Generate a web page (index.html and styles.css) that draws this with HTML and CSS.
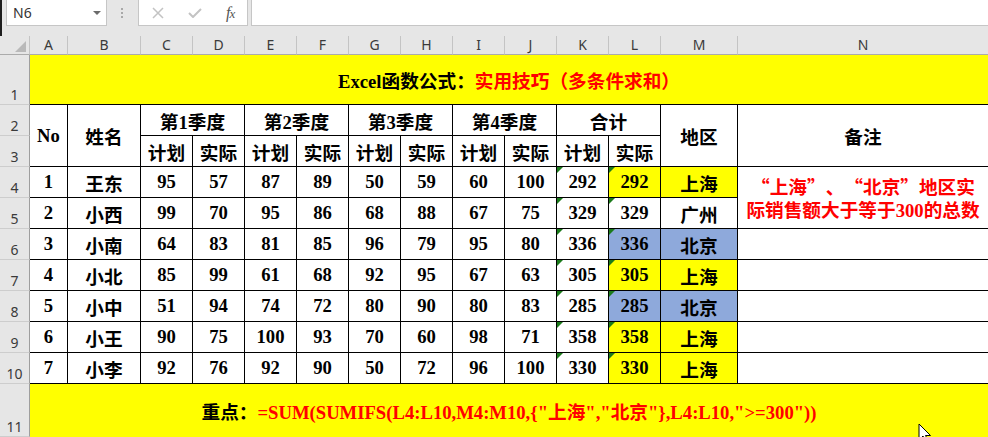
FILE: index.html
```html
<!DOCTYPE html>
<html lang="zh-CN">
<head>
  <meta charset="UTF-8">
  <meta name="viewport" content="width=device-width, initial-scale=1.0">
  <title>Excel函数公式：多条件求和</title>
  <link rel="stylesheet" href="styles.css">
</head>
<body>
  <div class="toolbar">
    <div class="name-box">
      <span>N6</span>
      <svg width="8" height="4" viewBox="0 0 8 4"><path d="M0 0H8L4 4Z" fill="#6b6b6b"/></svg>
    </div>
    <svg class="grip" width="3" height="11" viewBox="0 0 3 11">
      <rect x="0" y="0" width="2" height="2" fill="#a8a8a8"/>
      <rect x="0" y="4" width="2" height="2" fill="#a8a8a8"/>
      <rect x="0" y="8" width="2" height="2" fill="#a8a8a8"/>
    </svg>
    <div class="fx-box">
      <svg class="cancel" width="12" height="12" viewBox="0 0 12 12">
        <path d="M1 1L11 11M11 1L1 11" stroke="#c3c3c3" stroke-width="1.5"/>
      </svg>
      <svg class="enter" width="14" height="10" viewBox="0 0 14 10">
        <path d="M1 5L5 9L13 1" stroke="#c3c3c3" stroke-width="2" fill="none"/>
      </svg>
      <span class="fx">f<i>x</i></span>
    </div>
    <div class="formula-input"></div>
  </div>

  <div class="sheet">
    <!-- column headers -->
    <div class="corner">
      <svg width="11" height="11" viewBox="0 0 11 11"><path d="M11 0V11H0Z" fill="#b9b9b9"/></svg>
    </div>
    <div class="ch">A</div>
    <div class="ch">B</div>
    <div class="ch">C</div>
    <div class="ch">D</div>
    <div class="ch">E</div>
    <div class="ch">F</div>
    <div class="ch">G</div>
    <div class="ch">H</div>
    <div class="ch">I</div>
    <div class="ch">J</div>
    <div class="ch">K</div>
    <div class="ch">L</div>
    <div class="ch">M</div>
    <div class="ch last">N</div>

    <!-- row 1 -->
    <div class="rh">1</div>
    <div class="banner title">Excel函数公式：<span class="red">实用技巧（多条件求和）</span></div>

    <!-- rows 2-3 -->
    <div class="rh">2</div>
    <div class="c span-r">No</div>
    <div class="c span-r">姓名</div>
    <div class="c span-c">第1季度</div>
    <div class="c span-c">第2季度</div>
    <div class="c span-c">第3季度</div>
    <div class="c span-c">第4季度</div>
    <div class="c span-c">合计</div>
    <div class="c span-r">地区</div>
    <div class="c span-r last">备注</div>

    <div class="rh">3</div>
    <div class="c">计划</div><div class="c">实际</div>
    <div class="c">计划</div><div class="c">实际</div>
    <div class="c">计划</div><div class="c">实际</div>
    <div class="c">计划</div><div class="c">实际</div>
    <div class="c">计划</div><div class="c">实际</div>

    <!-- data -->
    <div class="rh">4</div>
    <div class="c">1</div><div class="c">王东</div>
    <div class="c">95</div><div class="c">57</div><div class="c">87</div><div class="c">89</div>
    <div class="c">50</div><div class="c">59</div><div class="c">60</div><div class="c">100</div>
    <div class="c flag">292</div><div class="c flag y">292</div><div class="c y">上海</div>
    <div class="c span-r last note">
      <span class="note-text">“上海”、“北京”地区实<br>际销售额大于等于<span class="num">300</span>的总数</span>
    </div>

    <div class="rh">5</div>
    <div class="c">2</div><div class="c">小西</div>
    <div class="c">99</div><div class="c">70</div><div class="c">95</div><div class="c">86</div>
    <div class="c">68</div><div class="c">88</div><div class="c">67</div><div class="c">75</div>
    <div class="c flag">329</div><div class="c flag">329</div><div class="c">广州</div>

    <div class="rh">6</div>
    <div class="c">3</div><div class="c">小南</div>
    <div class="c">64</div><div class="c">83</div><div class="c">81</div><div class="c">85</div>
    <div class="c">96</div><div class="c">79</div><div class="c">95</div><div class="c">80</div>
    <div class="c flag">336</div><div class="c flag b">336</div><div class="c b">北京</div>
    <div class="c last"></div>

    <div class="rh">7</div>
    <div class="c">4</div><div class="c">小北</div>
    <div class="c">85</div><div class="c">99</div><div class="c">61</div><div class="c">68</div>
    <div class="c">92</div><div class="c">95</div><div class="c">67</div><div class="c">63</div>
    <div class="c flag">305</div><div class="c flag y">305</div><div class="c y">上海</div>
    <div class="c last"></div>

    <div class="rh">8</div>
    <div class="c">5</div><div class="c">小中</div>
    <div class="c">51</div><div class="c">94</div><div class="c">74</div><div class="c">72</div>
    <div class="c">80</div><div class="c">90</div><div class="c">80</div><div class="c">83</div>
    <div class="c flag">285</div><div class="c flag b">285</div><div class="c b">北京</div>
    <div class="c last"></div>

    <div class="rh">9</div>
    <div class="c">6</div><div class="c">小王</div>
    <div class="c">90</div><div class="c">75</div><div class="c">100</div><div class="c">93</div>
    <div class="c">70</div><div class="c">60</div><div class="c">98</div><div class="c">71</div>
    <div class="c flag">358</div><div class="c flag y">358</div><div class="c y">上海</div>
    <div class="c last"></div>

    <div class="rh">10</div>
    <div class="c">7</div><div class="c">小李</div>
    <div class="c">92</div><div class="c">76</div><div class="c">92</div><div class="c">90</div>
    <div class="c">50</div><div class="c">72</div><div class="c">96</div><div class="c">100</div>
    <div class="c flag">330</div><div class="c flag y">330</div><div class="c y">上海</div>
    <div class="c last"></div>

    <!-- row 11 -->
    <div class="rh">11</div>
    <div class="banner formula">重点：<span class="red">=SUM(SUMIFS(L4:L10,M4:M10,{"上海","北京"},L4:L10,"&gt;=300"))</span></div>
  </div>

  <svg class="cursor" width="13" height="20" viewBox="0 0 13 20">
    <path d="M1 1V17L5 13L8 19.5L10.5 18.5L7.5 12.5H12.5Z" fill="#fff" stroke="#000" stroke-width="1"/>
  </svg>
</body>
</html>
```

FILE: styles.css
```css
html, body {
  margin: 0;
  padding: 0;
}

body {
  width: 988px;
  height: 437px;
  overflow: hidden;
  position: relative;
  background: #fff;
  font-family: "Noto Sans", "DejaVu Sans", sans-serif;
}

/* formula bar */
.toolbar {
  display: flex;
  align-items: flex-start;
  height: 36px;
  box-sizing: border-box;
  background: #e6e6e6;
  border-left: 2px solid #1e1e1e;
}

.name-box {
  width: 101px;
  height: 26px;
  margin-left: 4px;
  box-sizing: border-box;
  background: #fff;
  border: 1px solid #c6c6c6;
  border-top: none;
  display: flex;
  align-items: center;
  justify-content: space-between;
  padding: 0 5px 0 6px;
  font-size: 14px;
  color: #333;
}

.grip {
  margin: 8px 0 0 14px;
}

.fx-box {
  width: 110px;
  height: 26px;
  margin-left: 14px;
  box-sizing: border-box;
  background: #fff;
  border: 1px solid #c6c6c6;
  border-top: none;
  display: flex;
  align-items: center;
  padding-left: 13px;
}

.enter {
  margin-left: 24px;
}

.fx {
  margin-left: 24px;
  font-family: "Liberation Serif", serif;
  font-style: italic;
  font-size: 16px;
  color: #555;
  letter-spacing: -1px;
}

.fx i {
  font-size: 13px;
}

.formula-input {
  flex: 1;
  height: 26px;
  margin-left: 3px;
  box-sizing: border-box;
  background: #fff;
  border-left: 1px solid #c6c6c6;
  border-bottom: 1px solid #c6c6c6;
}

/* sheet grid */
.sheet {
  display: grid;
  grid-template-columns: 30px 38px 73px repeat(10, 52px) 77px 250px;
  grid-template-rows: 19px 50px repeat(9, 31px) 53px;
}

.sheet > div {
  box-sizing: border-box;
}

.corner, .ch {
  background: #e6e6e6;
  border-right: 1px solid #c4c4c4;
  border-bottom: 1px solid #ababab;
  display: flex;
  align-items: flex-end;
}

.corner {
  justify-content: flex-end;
  padding: 0 3px 2px 0;
}

.ch {
  justify-content: center;
  font-size: 14px;
  line-height: 16px;
  color: #3a3a3a;
  padding-bottom: 1px;
}

.ch.last {
  border-right: none;
}

.rh {
  background: #e6e6e6;
  border-right: 1px solid #9e9e9e;
  border-bottom: 1px solid #cdcdcd;
  display: flex;
  align-items: flex-end;
  justify-content: center;
  font-size: 14px;
  line-height: 16px;
  color: #3a3a3a;
  padding-bottom: 1px;
}

.c, .banner {
  font-family: "Liberation Serif", "Noto Sans CJK SC", serif;
  font-weight: 700;
  font-size: 18.67px;
  color: #000;
  text-spacing-trim: space-all;
}

.c {
  position: relative;
  background: #fff;
  border-right: 1px solid #000;
  border-bottom: 1px solid #000;
  display: flex;
  align-items: center;
  justify-content: center;
  white-space: nowrap;
}

.c.last {
  border-right: none;
}

.span-r {
  grid-row: span 2;
}

.span-c {
  grid-column: span 2;
}

.y {
  background: #ffff00;
}

.b {
  background: #8ea9db;
}

.flag::before {
  content: "";
  position: absolute;
  left: 0;
  top: 0;
  border-top: 6px solid #1b7b1b;
  border-right: 6px solid transparent;
}

.note {
  color: #ff0000;
  padding-top: 1px;
}

.note-text {
  display: block;
  font-family: "Noto Sans CJK SC", "Liberation Serif", sans-serif;
  font-feature-settings: "fwid" 1;
  line-height: 23px;
  text-align: center;
}

.note .num {
  font-family: "Liberation Serif", serif;
}

.banner {
  grid-column: span 14;
  background: #ffff00;
  display: flex;
  align-items: center;
  justify-content: center;
  white-space: nowrap;
}

.title {
  border-bottom: 1px solid #000;
}

.red {
  color: #ff0000;
}

.cursor {
  position: absolute;
  left: 918px;
  top: 423px;
}
```
